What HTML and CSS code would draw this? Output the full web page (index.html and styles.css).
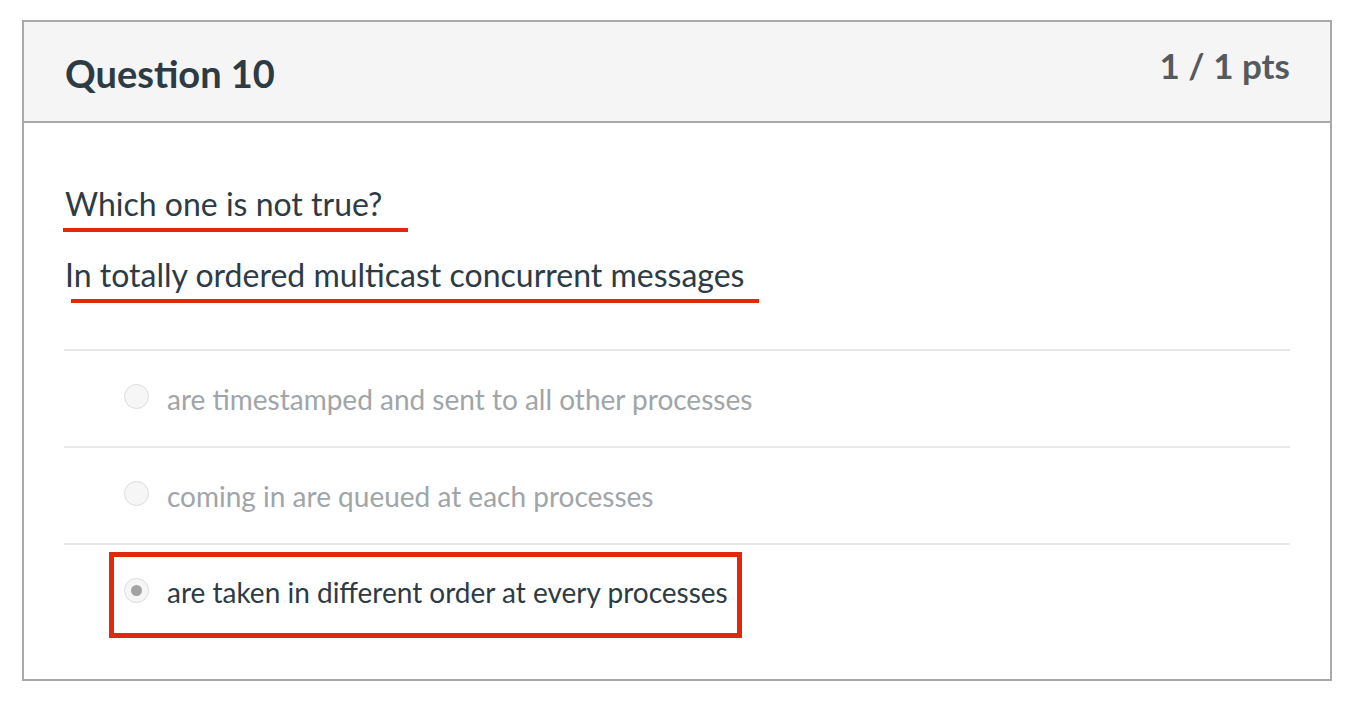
FILE: index.html
```html
<!DOCTYPE html>
<html lang="en">
<head>
<meta charset="utf-8">
<title>Question 10</title>
<link rel="stylesheet" href="styles.css">
</head>
<body>
<div class="card">
  <div class="card-header">
    <h2 class="q-title">Question 10</h2>
    <div class="q-points">1 / 1 pts</div>
  </div>
  <div class="card-body">
    <div class="q-text">
      <p class="q-line q-line-1"><span class="mark mark-1">Which one is not true?</span></p>
      <p class="q-line q-line-2"><span class="mark mark-2">In totally ordered multicast concurrent messages</span></p>
    </div>
    <div class="answers">
      <div class="answer muted">
        <span class="radio"></span>
        <span class="answer-text">are timestamped and sent to all other processes</span>
      </div>
      <div class="answer muted">
        <span class="radio"></span>
        <span class="answer-text">coming in are queued at each processes</span>
      </div>
      <div class="answer selected">
        <div class="highlight">
          <span class="radio checked"></span>
          <span class="answer-text">are taken in different order at every processes</span>
        </div>
      </div>
    </div>
  </div>
</div>
</body>
</html>
```

FILE: styles.css
```css
html, body {
  margin: 0;
  padding: 0;
  background: #ffffff;
}

body {
  font-family: Lato, "Open Sans", "Liberation Sans", sans-serif;
  color: #2d3b45;
}

.card {
  width: 1306px;
  margin: 20px 0 0 22px;
  border: 2px solid #aaaaaa;
  background: #ffffff;
}

.card-header {
  height: 101px;
  box-sizing: border-box;
  background: #f5f5f5;
  border-bottom: 2px solid #aaaaaa;
  display: flex;
  justify-content: space-between;
  align-items: flex-start;
  padding: 0 40px 0 41px;
}

.q-title {
  margin: 0;
  padding-top: 29px;
  font-size: 38px;
  line-height: 44px;
  font-weight: 700;
  color: #2d3b45;
}

.q-points {
  padding-top: 23px;
  font-size: 35px;
  line-height: 40px;
  font-weight: 700;
  color: #555a5f;
}

.card-body {
  padding: 0 40px;
}

.q-text {
  padding-top: 59px;
  padding-bottom: 52px;
}

.q-line {
  margin: 0;
  font-size: 32px;
  line-height: 44px;
  color: #2d3b45;
}

.q-line-1 {
  margin-bottom: 27px;
}

.mark {
  display: inline-block;
  position: relative;
  padding-left: 1px;
}

.mark::after {
  content: "";
  position: absolute;
  height: 4px;
  background: #e0290c;
  bottom: -6px;
}

.mark-1::after {
  left: -1px;
  right: -26px;
}

.mark-2::after {
  left: 7px;
  right: -15px;
}

.answers {
  border-top: 2px solid #e8e8e8;
}

.answer {
  height: 97px;
  box-sizing: border-box;
  border-bottom: 2px solid #e8e8e8;
  display: flex;
  align-items: center;
  padding-left: 60px;
  font-size: 28px;
}

.answer:last-child {
  border-bottom: none;
  height: 134px;
  align-items: flex-start;
  padding-left: 45px;
  padding-top: 7px;
}

.answer.muted {
  color: #a0a5a9;
}

.answer.selected {
  color: #2d3b45;
}

.highlight {
  display: flex;
  align-items: center;
  box-sizing: border-box;
  width: 633px;
  height: 86px;
  border: 5px solid #e0290c;
  padding-left: 10px;
  padding-bottom: 6px;
}

.radio {
  flex: none;
  width: 23px;
  height: 23px;
  border-radius: 50%;
  border: 1px solid #dcdcdc;
  background: #f6f6f6;
  margin-right: 18px;
  position: relative;
  top: -2px;
}

.radio.checked::after {
  content: "";
  position: absolute;
  left: 6px;
  top: 6px;
  width: 11px;
  height: 11px;
  border-radius: 50%;
  background: #a3a3a3;
}

.answer-text {
  white-space: nowrap;
}
```
